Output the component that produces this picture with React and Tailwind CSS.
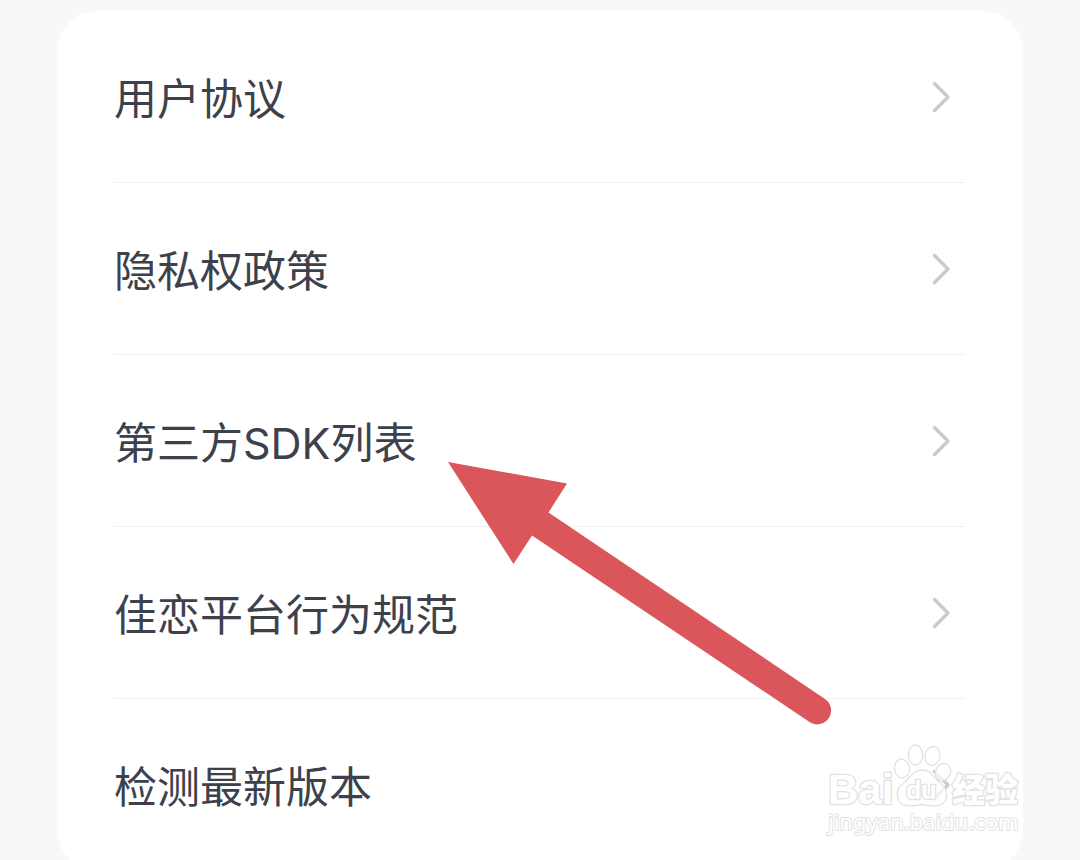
import React from 'react';

const menuItems = [
  { id: 'agreement', label: '用户协议' },
  { id: 'privacy', label: '隐私权政策' },
  { id: 'sdk', label: '第三方SDK列表' },
  { id: 'conduct', label: '佳恋平台行为规范' },
  { id: 'version', label: '检测最新版本' },
];

function Chevron() {
  return (
    <svg width="20" height="32" viewBox="0 0 20 32" fill="none" stroke="#cbcbcb" strokeWidth="3.5" strokeLinecap="round" strokeLinejoin="round" aria-hidden="true">
      <path d="M3.5 2.5 L17 16 L3.5 29.5" />
    </svg>
  );
}

function PointerArrow() {
  return (
    <svg className="absolute left-[390px] top-[450px] pointer-events-none" width="386" height="266" viewBox="0 0 386 266" fill="#db565b" aria-hidden="true">
      <path d="M1 1 L120 22.5 L101.5 51.5 L378 238 A13.8 13.8 0 0 1 362.5 261 L85 74.5 L66.5 103 Z" />
    </svg>
  );
}

function Watermark() {
  return (
    <svg className="absolute right-0 top-[731px] pointer-events-none" width="200" height="100" viewBox="0 0 200 100" fill="#ffffff" stroke="#e2e2e2" strokeWidth="1.3" strokeLinejoin="round">
      <g fillOpacity="0.75">
        <ellipse cx="79" cy="26.5" rx="7.5" ry="9.5" transform="rotate(-8 79 26.5)" />
        <ellipse cx="92.5" cy="13" rx="7.2" ry="10" />
        <ellipse cx="109.5" cy="14" rx="7.5" ry="9.5" transform="rotate(10 109.5 14)" />
        <ellipse cx="120" cy="30" rx="7.5" ry="8.8" transform="rotate(20 120 30)" />
        <path d="M99 28 C91 28 88 34 84 38 C79 43 73 46 74.500 55 C76 65 86 65 99 62.500 C111 65 122 65 123.500 55 C125 46 119 43 114 38 C110 34 107 28 99 28 Z" />
      </g>
      <g strokeWidth="2.6" style={{ paintOrder: 'stroke' }}>
        <text x="5" y="62" fontSize="42" fontWeight="700" fontFamily="'Liberation Sans', sans-serif">Bai</text>
        <text x="83" y="57" fontSize="25" fontWeight="700" fontFamily="'Liberation Sans', sans-serif">du</text>
        <text x="129" y="60" fontSize="33" fontWeight="900" fontFamily="'Noto Sans CJK SC', sans-serif">经验</text>
        <text x="5" y="88" fontSize="22" fontWeight="400" strokeWidth="2" fontFamily="'Noto Sans', sans-serif">jingyan.baidu.com</text>
      </g>
    </svg>
  );
}

function App() {
  return (
    <main className="h-screen overflow-hidden bg-[#f8f8f8] px-[57px] pt-[11px] font-['Inter','Noto_Sans_CJK_SC',sans-serif] text-[#3d414c]">
      <div className="relative rounded-[40px] bg-white pl-[57px] pr-[58px]">
        <ul>
          {menuItems.map((item) => (
            <li key={item.id} className="border-b border-[#f0f0f0] last:border-b-0">
              <button type="button" className="flex h-[171px] w-full items-center justify-between pr-[14px] text-left text-[43px] leading-[64px]">
                <span className="pt-1">{item.label}</span>
                <Chevron />
              </button>
            </li>
          ))}
        </ul>
        <PointerArrow />
        <Watermark />
      </div>
    </main>
  );
}

export default App;
